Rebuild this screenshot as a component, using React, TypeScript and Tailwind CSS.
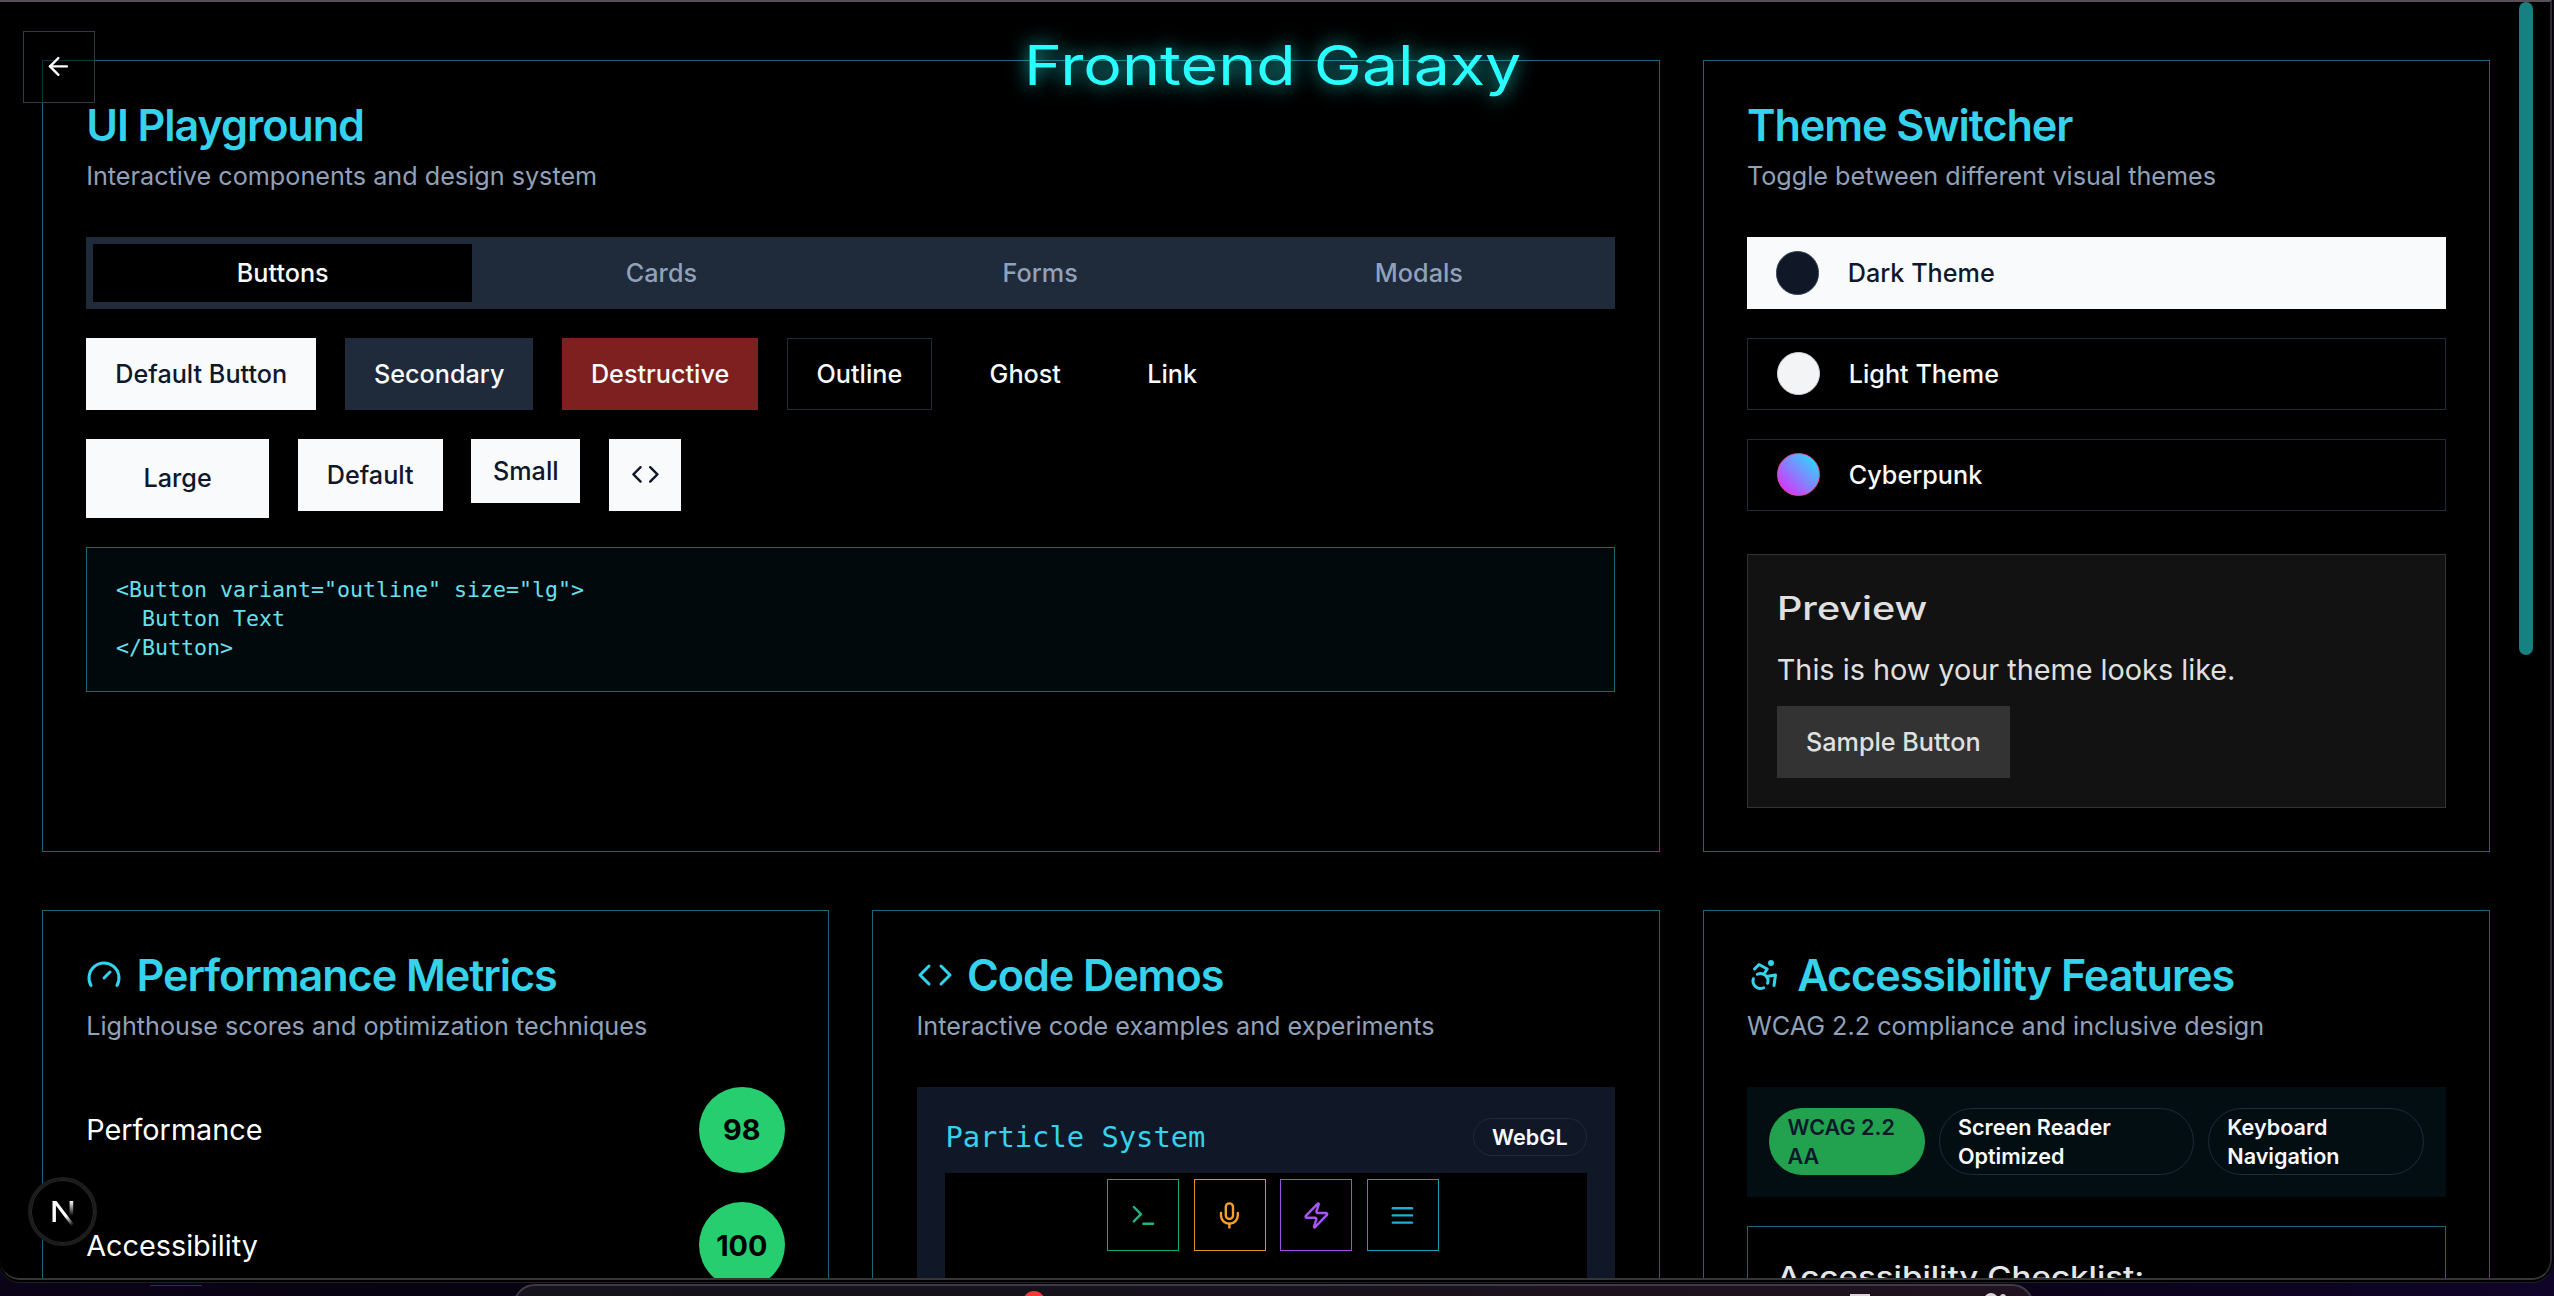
import React from "react";

type IconProps = { className?: string; children: React.ReactNode };

function Icon({ className = "", children }: IconProps) {
  return (
    <svg
      viewBox="0 0 24 24"
      fill="none"
      stroke="currentColor"
      strokeWidth={2}
      strokeLinecap="round"
      strokeLinejoin="round"
      className={`shrink-0 ${className}`}
    >
      {children}
    </svg>
  );
}

const CodeIcon = ({ className }: { className?: string }) => (
  <Icon className={className}>
    <path d="m16 18 6-6-6-6" />
    <path d="m8 6-6 6 6 6" />
  </Icon>
);

function Card({
  title,
  subtitle,
  icon,
  className = "",
  children,
}: {
  title: string;
  subtitle: string;
  icon?: React.ReactNode;
  className?: string;
  children: React.ReactNode;
}) {
  return (
    <section className={`min-w-0 border border-[#1b677a] bg-black ${className}`}>
      <header className="flex flex-col gap-1.5 p-6">
        <h2 className="flex items-center gap-2 text-2xl leading-none font-semibold tracking-tight text-[#34d2eb]">
          {icon}
          {title}
        </h2>
        <p className="text-sm text-slate-400">{subtitle}</p>
      </header>
      <div className="px-6 pb-6">{children}</div>
    </section>
  );
}

function Button({ className = "", children }: { className?: string; children: React.ReactNode }) {
  return (
    <button className={`flex shrink-0 items-center justify-center text-sm font-medium whitespace-nowrap ${className}`}>
      {children}
    </button>
  );
}

const solid = "bg-slate-50 text-slate-900";

function Playground() {
  return (
    <Card title="UI Playground" subtitle="Interactive components and design system" className="col-span-2">
      <div className="grid h-10 grid-cols-4 bg-[#1f2a3b] p-1 text-sm font-medium text-slate-400">
        <button className="bg-black text-slate-50">Buttons</button>
        <button>Cards</button>
        <button>Forms</button>
        <button>Modals</button>
      </div>
      <div className="mt-4 flex gap-4">
        <Button className={`h-10 w-[230px] ${solid}`}>Default Button</Button>
        <Button className="h-10 w-[188.4px] bg-[#1f2a3b] text-slate-50">Secondary</Button>
        <Button className="h-10 w-[195.8px] bg-[#7e1f20] text-slate-50">Destructive</Button>
        <Button className="h-10 w-[145.2px] border border-[#1f2a3b] text-slate-50">Outline</Button>
        <Button className="h-10 px-4 text-slate-50">Ghost</Button>
        <Button className="h-10 px-4 text-slate-50">Link</Button>
      </div>
      <div className="mt-4 flex items-start gap-4">
        <Button className={`h-11 w-[182.8px] ${solid}`}>Large</Button>
        <Button className={`h-10 w-[144.8px] ${solid}`}>Default</Button>
        <Button className={`h-9 w-[108.8px] ${solid}`}>Small</Button>
        <Button className={`h-10 w-10 ${solid}`}>
          <CodeIcon className="size-4" />
        </Button>
      </div>
      <pre className="mt-4 border border-[#1b677a] bg-[#02090c] p-4 font-['DejaVu_Sans_Mono',monospace] text-xs text-[#67e0ee]">
        {'<Button variant="outline" size="lg">\n  Button Text\n</Button>'}
      </pre>
    </Card>
  );
}

function ThemeSwitcher() {
  return (
    <Card title="Theme Switcher" subtitle="Toggle between different visual themes">
      <div className="flex flex-col gap-4">
        <button className="flex h-10 items-center gap-4 bg-slate-50 px-4 text-sm font-medium text-slate-900">
          <span className="size-6 rounded-full border border-gray-700 bg-gray-900" />
          Dark Theme
        </button>
        <button className="flex h-10 items-center gap-4 border border-[#1f2a3b] px-4 text-sm font-medium text-slate-50">
          <span className="size-6 rounded-full border border-gray-300 bg-gray-100" />
          Light Theme
        </button>
        <button className="flex h-10 items-center gap-4 border border-[#1f2a3b] px-4 text-sm font-medium text-slate-50">
          <span className="size-6 rounded-full border border-[#ec4899] bg-linear-to-tr/srgb from-[#f01cfb] to-[#16ecff]" />
          Cyberpunk
        </button>
      </div>
      <div className="mt-6 flex flex-col items-start border border-[#333333] bg-[#121212] p-4 text-[#e0e0e0]">
        <h3 className="mb-2 text-lg leading-[1.5556]">
          <span className="inline-block origin-left scale-x-[1.22] font-medium">Preview</span>
        </h3>
        <p className="mb-2 text-base">This is how your theme looks like.</p>
        <Button className="h-10 w-[233px] bg-[#333333]">Sample Button</Button>
      </div>
    </Card>
  );
}

function Score({ label, value }: { label: string; value: number }) {
  return (
    <div className="flex items-center justify-between text-base text-white">
      <span>{label}</span>
      <span className="flex size-12 items-center justify-center rounded-full bg-[#26ce70] font-bold text-black">
        {value}
      </span>
    </div>
  );
}

function Performance() {
  return (
    <Card
      title="Performance Metrics"
      subtitle="Lighthouse scores and optimization techniques"
      icon={
        <Icon className="size-5">
          <path d="m12 14 4-4" />
          <path d="M3.34 19a10 10 0 1 1 17.32 0" />
        </Icon>
      }
    >
      <div className="flex flex-col gap-4">
        <Score label="Performance" value={98} />
        <Score label="Accessibility" value={100} />
      </div>
    </Card>
  );
}

function CodeDemos() {
  return (
    <Card title="Code Demos" subtitle="Interactive code examples and experiments" icon={<CodeIcon className="size-5" />}>
      <div className="bg-gray-900 p-4">
        <div className="mb-2 flex items-center justify-between">
          <h3 className="font-['DejaVu_Sans_Mono',monospace] text-base text-[#34d2eb]">Particle System</h3>
          <span className="rounded-full border border-[#1f2a3b] px-2.5 py-0.5 text-xs font-semibold text-slate-50">
            WebGL
          </span>
        </div>
        <div className="h-40 bg-black" />
      </div>
    </Card>
  );
}

function AccessibilityCard() {
  return (
    <Card
      title="Accessibility Features"
      subtitle="WCAG 2.2 compliance and inclusive design"
      icon={
        <Icon className="size-5">
          <circle cx="16" cy="4" r="1" />
          <path d="m18 19 1-7-6 1" />
          <path d="m5 8 3-3 5.5 3-2.36 3.5" />
          <path d="M4.24 14.5a5 5 0 0 0 6.88 6" />
          <path d="M13.76 17.5a5 5 0 0 0-6.88-6" />
        </Icon>
      }
    >
      <div className="flex gap-2 bg-[#020e12] p-3 text-xs font-semibold">
        <span className="w-[156px] rounded-full border border-[#22a24e] bg-[#22a24e] px-2.5 py-0.5 text-slate-900">
          WCAG 2.2 AA
        </span>
        <span className="w-[255px] rounded-full border border-[#1f2a3b] px-2.5 py-0.5 text-slate-50">
          Screen Reader
          <br />
          Optimized
        </span>
        <span className="w-[216px] rounded-full border border-[#1f2a3b] px-2.5 py-0.5 text-slate-50">
          Keyboard
          <br />
          Navigation
        </span>
      </div>
      <div className="mt-4 h-60 border border-[#1b677a] p-4">
        <h3 className="text-base text-[#e4e7ea]">
          <span className="inline-block origin-left scale-x-[1.15] font-medium">Accessibility Checklist:</span>
        </h3>
      </div>
    </Card>
  );
}

function Toolbar() {
  return (
    <nav className="absolute top-[1179px] left-[1107.4px] flex gap-2">
      <button className="flex size-10 items-center justify-center border border-[#14a878] bg-black text-[#1db584]">
        <Icon className="size-4">
          <path d="m4 17 6-6-6-6" />
          <path d="M12 19h8" />
        </Icon>
      </button>
      <button className="flex size-10 items-center justify-center border border-[#e0901f] bg-black text-[#f5a02a]">
        <Icon className="size-4">
          <path d="M12 2a3 3 0 0 0-3 3v7a3 3 0 0 0 6 0V5a3 3 0 0 0-3-3Z" />
          <path d="M19 10v2a7 7 0 0 1-14 0v-2" />
          <path d="M12 19v3" />
        </Icon>
      </button>
      <button className="flex size-10 items-center justify-center border border-[#9a4fe0] bg-black text-[#a855f7]">
        <Icon className="size-4">
          <path d="M4 14a1 1 0 0 1-.78-1.63l9.9-10.2a.5.5 0 0 1 .86.46l-1.92 6.02A1 1 0 0 0 13 10h7a1 1 0 0 1 .78 1.63l-9.9 10.2a.5.5 0 0 1-.86-.46l1.92-6.02A1 1 0 0 0 11 14z" />
        </Icon>
      </button>
      <button className="flex size-10 items-center justify-center border border-[#189fb8] bg-black text-[#1bb2d0]">
        <Icon className="size-4">
          <path d="M4 12h16" />
          <path d="M4 6h16" />
          <path d="M4 18h16" />
        </Icon>
      </button>
    </nav>
  );
}

function NextBadge() {
  return (
    <div className="absolute top-[1177px] left-[28px] flex size-[69px] items-center justify-center rounded-full border-[3px] border-[#1d1d1d] bg-black ring-1 ring-[#2c2c2c] ring-inset">
      <svg viewBox="0 0 24 30" className="h-[30px] w-[24px]" fill="none">
        <defs>
          <linearGradient id="stem" x1="0" y1="4" x2="0" y2="19" gradientUnits="userSpaceOnUse">
            <stop stopColor="#fff" />
            <stop offset="1" stopColor="#fff" stopOpacity="0" />
          </linearGradient>
          <linearGradient id="diag" x1="15" y1="19" x2="22" y2="28.5" gradientUnits="userSpaceOnUse">
            <stop stopColor="#fff" />
            <stop offset="1" stopColor="#fff" stopOpacity="0" />
          </linearGradient>
        </defs>
        <path d="M1.5 4h3.4v21H1.5z" fill="#fff" />
        <path d="M1.5 4h4L23 27.2 20.6 29.2z" fill="url(#diag)" />
        <path d="M18.6 4h3.6v16h-3.6z" fill="url(#stem)" />
      </svg>
    </div>
  );
}

function Dock() {
  return (
    <div className="absolute top-[1284px] left-[513px] flex h-20 w-[1521px] items-start rounded-[22px] border-2 border-[#403a47] bg-linear-to-r from-[#15131b] via-[#17121d] to-[#21121f]">
      <span className="mt-[5px] ml-[508px] size-[22px] rounded-full bg-[#f03b36]" />
      <span className="mt-[8px] ml-[805px] h-[4px] w-[20px] bg-[#d8d5da]" />
      <span className="mt-[7px] ml-[114px] size-[14px] rounded-full bg-[#d8d5da]" />
      <span className="mt-[8px] ml-[2px] size-[6px] rounded-full bg-[#d8d5da]" />
    </div>
  );
}

export default function App() {
  return (
    <div className="relative h-[1296px] w-[2554px] overflow-hidden bg-linear-to-r from-[#0b0418] via-[#040207] to-[#100428] font-[Inter,sans-serif] [--spacing:7.2px] [--text-2xl:43.2px] [--text-base:28.8px] [--text-lg:32.4px] [--text-sm:25.2px] [--text-xs:21.6px]">
      <div className="absolute top-[1285px] left-[150px] h-px w-[52px] bg-[#1c3557]" />
      <Dock />
      <div className="relative h-[1280px] w-[2552px] overflow-hidden rounded-b-[20px] bg-black shadow-[0_1px_0_1px_#000,0_2px_0_1px_#1f1f1f]">
        <main className="flex flex-col gap-8 pt-[59.6px] pr-[62px] pl-[42px]">
          <div className="grid grid-cols-3 gap-6">
            <Playground />
            <ThemeSwitcher />
          </div>
          <div className="grid grid-cols-3 gap-6">
            <Performance />
            <CodeDemos />
            <AccessibilityCard />
          </div>
        </main>

        <h1 className="absolute top-[23px] left-[1024px] origin-left scale-x-[1.172] text-[55px] leading-[84px] whitespace-nowrap text-[#29fdfd] [text-shadow:0_0_18px_rgba(34,240,240,0.85)]">
          Frontend Galaxy
        </h1>

        <button className="absolute top-[31px] left-[22.6px] flex size-10 items-center justify-center border border-[#2f3a4a] bg-black/50 pr-px pb-px text-white">
          <Icon className="size-4">
            <path d="m12 19-7-7 7-7" />
            <path d="M19 12H5" />
          </Icon>
        </button>

        <Toolbar />
        <NextBadge />

        <div className="absolute top-[2px] left-[2519px] h-[653px] w-[14px] rounded-full bg-[#178080]" />
        <div className="pointer-events-none absolute inset-0 rounded-b-[20px] border-2 border-l-0 border-t-[#57505a] border-r-[#2b2930] border-b-[#363636]" />
      </div>
    </div>
  );
}
